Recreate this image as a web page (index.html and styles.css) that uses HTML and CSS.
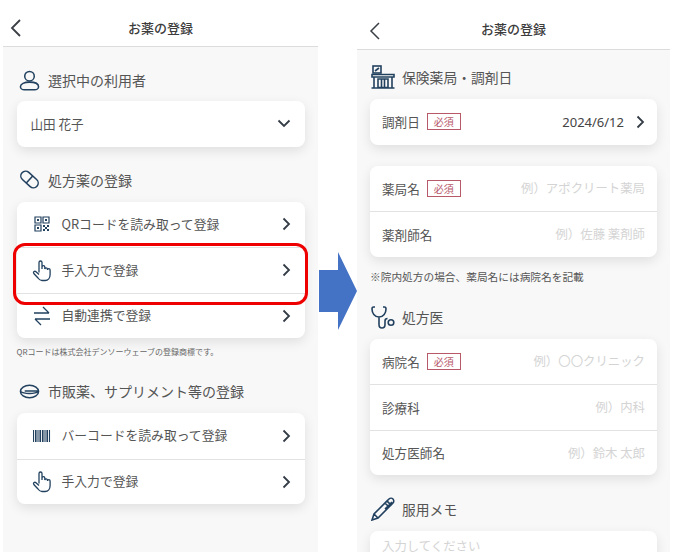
FILE: index.html
```html
<!DOCTYPE html>
<html lang="ja">
<head>
<meta charset="utf-8">
<title>お薬の登録</title>
<link rel="stylesheet" href="styles.css">
</head>
<body>
<main class="stage">
  <section class="screen screen-left">
    <header class="nav">
      <svg class="back" viewBox="0 0 12 20"><path d="M10 2 2 10l8 8"/></svg>
      <h1>お薬の登録</h1>
    </header>
    <div class="content">
      <h2 class="head h-user"><svg class="ico" viewBox="0 0 22 22"><circle cx="11" cy="6.500" r="5"/><path d="M1.500 17.500c0-3 4-4.800 9.500-4.800s9.500 1.800 9.500 4.800c0 2-2 3.300-4 3.300H5.500c-2 0-4-1.300-4-3.300z"/></svg>選択中の利用者</h2>
      <div class="card"><div class="row"><span class="label">山田 花子</span><svg class="chev-d" viewBox="0 0 14 9"><path d="M1.500 1.500 7 7l5.500-5.500"/></svg></div></div>
      <h2 class="head h-rx"><svg class="ico" viewBox="0 0 22 22"><g transform="rotate(42 11 11)"><rect x="0.500" y="6" width="21" height="10" rx="5"/><path d="M11 6v10"/></g></svg>処方薬の登録</h2>
      <div class="card">
        <div class="row"><span class="rico"><svg viewBox="0 0 16 16" class="qr"><path d="M1 1h6v6H1zM9 1h6v6H9zM1 9h6v6H1z"/><path class="fill" d="M3 3h2v2H3zM11 3h2v2h-2zM3 11h2v2H3zM9 9h2v2H9zM13 9h2v2h-2zM11 11h2v2h-2zM9 13h2v2H9zM13 13h2v2h-2z"/></svg></span><span class="label">QRコードを読み取って登録</span><svg class="chev" viewBox="0 0 9 14"><path d="M1.500 1.500 7 7l-5.500 5.500"/></svg></div>
        <div class="row"><span class="rico"><svg viewBox="0 0 20 22" class="hand"><path d="M7 13V3a1.500 1.500 0 0 1 3 0v6.500V7.500a1.400 1.400 0 0 1 2.800 0v2a1.400 1.400 0 0 1 2.700 0v1a1.300 1.300 0 0 1 2.600 0v4.500c0 3.500-2 6-5 6H10c-2 0-3-1-4-2.500L1.800 14c-1-1.500.8-3 2.200-1.800L7 15"/></svg></span><span class="label">手入力で登録</span><svg class="chev" viewBox="0 0 9 14"><path d="M1.500 1.500 7 7l-5.500 5.500"/></svg></div>
        <div class="row"><span class="rico"><svg viewBox="0 0 18 20" class="sw"><path d="M1 7h15M10 1l6 6M17 13H2M8 19l-6-6"/></svg></span><span class="label">自動連携で登録</span><svg class="chev" viewBox="0 0 9 14"><path d="M1.500 1.500 7 7l-5.500 5.500"/></svg></div>
      </div>
      <p class="fine">QRコードは株式会社デンソーウェーブの登録商標です。</p>
      <h2 class="head h-otc"><svg class="ico" viewBox="0 0 22 22"><ellipse cx="11" cy="11" rx="9.500" ry="6.500"/><path d="M1.500 11c2 1.500 5 2 9.500 2s7.500-.5 9.500-2M6 10.500h14"/></svg>市販薬、サプリメント等の登録</h2>
      <div class="card">
        <div class="row"><span class="rico"><svg viewBox="0 0 18 12" class="bar"><path d="M.5 0v12M2.500 0v12M4 0v12M6 0v12M7.500 0v12M9.500 0v12M11 0v12M13 0v12M14.500 0v12M16.500 0v12"/></svg></span><span class="label">バーコードを読み取って登録</span><svg class="chev" viewBox="0 0 9 14"><path d="M1.500 1.500 7 7l-5.500 5.500"/></svg></div>
        <div class="row"><span class="rico"><svg viewBox="0 0 20 22" class="hand"><path d="M7 13V3a1.500 1.500 0 0 1 3 0v6.500V7.500a1.400 1.400 0 0 1 2.800 0v2a1.400 1.400 0 0 1 2.700 0v1a1.300 1.300 0 0 1 2.600 0v4.500c0 3.500-2 6-5 6H10c-2 0-3-1-4-2.500L1.800 14c-1-1.500.8-3 2.200-1.800L7 15"/></svg></span><span class="label">手入力で登録</span><svg class="chev" viewBox="0 0 9 14"><path d="M1.500 1.500 7 7l-5.500 5.500"/></svg></div>
      </div>
    </div>
  </section>

  <section class="screen screen-right">
    <header class="nav">
      <svg class="back" viewBox="0 0 12 20"><path d="M10 2 2 10l8 8"/></svg>
      <h1>お薬の登録</h1>
    </header>
    <div class="content">
      <h2 class="head h-ph"><svg class="ico-ph" viewBox="0 0 24 24"><path d="M1 9.500h22v2.500H1zM3 12v10.500M21 12v10.500M.5 23h23M7 14v8.500h10V14zM10.500 14v8.500M13.500 14v8.500"/><rect x="2" y="1" width="8" height="7"/><path d="M4 6 8 3"/></svg>保険薬局・調剤日</h2>
      <div class="card"><div class="row"><span class="label">調剤日</span><span class="req">必須</span><span class="value">2024/6/12</span><svg class="chev" viewBox="0 0 9 14"><path d="M1.500 1.500 7 7l-5.500 5.500"/></svg></div></div>
      <div class="card card-pharm">
        <div class="row"><span class="label">薬局名</span><span class="req">必須</span><span class="ph">例）アポクリート薬局</span></div>
        <div class="row"><span class="label">薬剤師名</span><span class="ph">例）佐藤 薬剤師</span></div>
      </div>
      <p class="note">※院内処方の場合、薬局名には病院名を記載</p>
      <h2 class="head h-doc"><svg class="ico-ph" viewBox="0 0 24 24"><path d="M4 2H2.500C1.500 2 1 3 1 4c0 4 2.500 8 7 8s7-4 7-8c0-1-.5-2-1.500-2H12M8 12v7.500c0 2 1.300 3.500 3 3.500s3-1.500 3-3.500V16c0-1.500 1-2.500 2.500-2.500"/><circle cx="20" cy="17.500" r="2.800"/></svg>処方医</h2>
      <div class="card">
        <div class="row"><span class="label">病院名</span><span class="req">必須</span><span class="ph">例）〇〇クリニック</span></div>
        <div class="row"><span class="label">診療科</span><span class="ph">例）内科</span></div>
        <div class="row"><span class="label">処方医師名</span><span class="ph">例）鈴木 太郎</span></div>
      </div>
      <h2 class="head h-memo"><svg class="ico-ph" viewBox="0 0 24 24"><path d="M1 23l2-6L16 4l4 4L7 21zM3 17l4 4M14 6l4 4M18 2c1-1 3-1 4 0s1 3 0 4l-2 2-4-4zM21 5l-7 7"/></svg>服用メモ</h2>
      <div class="card card-memo"><div class="row row-memo"><span class="ph-memo">入力してください</span></div></div>
    </div>
  </section>

  <div class="highlight"></div>
  <svg class="arrow" viewBox="0 0 38 78"><path d="M0 18h19V0l19 39-19 39V60H0z"/></svg>
</main>
</body>
</html>
```
FILE: styles.css
```css
* { box-sizing: border-box; }
html, body { margin: 0; padding: 0; background: #fff; }
body {
  width: 673px;
  height: 556px;
  overflow: hidden;
  font-family: "Noto Sans CJK JP", "Noto Sans", sans-serif;
  color: #4a4a4a;
}
.stage { position: relative; width: 673px; height: 556px; display: flex; gap: 39px; padding-left: 3px; padding-top: 12px; }
.screen { height: 540px; background: #f8f8f8; overflow: hidden; flex: none; }
.screen-left { width: 315px; }
.screen-right { width: 313px; }
.nav {
  display: flex;
  align-items: center;
  justify-content: center;
  position: relative;
  background: #fff;
  border-bottom: 1px solid #dcdcdc;
}
.screen-left .nav { height: 35px; }
.screen-right .nav { height: 38px; }
.nav h1 { margin: 0; font-size: 13px; font-weight: 500; color: #3c3c3c; line-height: 1; position: relative; top: -2px; }
.back { position: absolute; left: 7px; top: 6px; width: 12px; height: 20px; fill: none; stroke: #3a3f45; stroke-width: 1.800; }
.screen-right .back { left: 12px; top: 9px; stroke-width: 1.500; }
.content { display: flex; flex-direction: column; padding: 0 13.500px; }
.screen-right .content { padding: 0 13px; }
.head {
  display: flex;
  align-items: center;
  gap: 8.500px;
  margin: 0;
  height: 22px;
  padding-left: 2px;
  font-size: 14px;
  font-weight: 400;
  color: #555;
  white-space: nowrap;
}
.screen-right .head { padding-left: 1px; gap: 7px; font-size: 13.800px; }
.h-user { margin-top: 22px; margin-bottom: 10px; }
.h-rx { margin-top: 22px; margin-bottom: 11px; }
.h-otc { margin-top: 22px; margin-bottom: 11px; }
.h-ph { margin-top: 16px; margin-bottom: 11px; }
.h-doc { margin-top: 22px; margin-bottom: 11px; }
.h-memo { margin-top: 23px; margin-bottom: 11px; }
.ico { width: 21px; height: 21px; fill: none; stroke: #22415f; stroke-width: 1.600; flex: none; }
.ico-ph { width: 24px; height: 24px; fill: none; stroke: #22415f; stroke-width: 1.600; flex: none; }
.card { background: #fff; border-radius: 8px; box-shadow: 0 4px 12px rgba(0,0,0,.10); }
.card-pharm { margin-top: 21px; }
.row {
  display: flex;
  align-items: center;
  height: 45.500px;
  padding: 0 12px;
  border-top: 1px solid #e2e2e2;
  font-size: 12.600px;
  color: #555;
}
.row:first-child { border-top: 0; }
.screen-left .row { padding: 0 14px 0 14px; }
.label { white-space: nowrap; }
.rico { width: 20px; display: flex; justify-content: center; margin-right: 10px; margin-left: 1px; flex: none; }
.rico + .label { font-size: 12.800px; margin-bottom: 2px; }
.chev, .chev-d { margin-left: auto; fill: none; stroke: #343c45; stroke-width: 1.800; flex: none; }
.chev { width: 9px; height: 14px; }
.chev-d { width: 14px; height: 9px; }
.req {
  margin-left: 7px;
  width: 34px;
  height: 17px;
  border: 1px solid #b8596a;
  color: #b8596a;
  font-size: 10px;
  display: flex;
  align-items: center;
  justify-content: center;
}
.value { margin-left: auto; font-family: "Noto Sans", sans-serif; font-size: 13px; color: #444; }
.value + .chev { margin-left: 12px; }
.ph { margin-left: auto; color: #d4d4d4; font-size: 12.400px; white-space: nowrap; }
.qr { width: 16px; height: 16px; fill: none; stroke: #22415f; stroke-width: 1.200; }
.qr .fill { fill: #22415f; stroke: none; }
.hand { width: 21px; height: 23px; fill: #fff; stroke: #22415f; stroke-width: 1.300; }
.sw { width: 18px; height: 20px; fill: none; stroke: #22415f; stroke-width: 1.300; }
.bar { width: 18px; height: 12px; fill: none; stroke: #22415f; stroke-width: 1.100; }
.fine { margin: 8px 0 0; font-size: 8px; line-height: 12px; color: #666; white-space: nowrap; }
.note { margin: 13px 0 0; font-size: 10.700px; line-height: 14px; color: #555; white-space: nowrap; }
.card-memo { min-height: 60px; }
.row-memo { align-items: flex-start; padding-top: 6px; }
.ph-memo { color: #d4d4d4; font-size: 12.400px; }
.highlight { position: absolute; left: 13px; top: 243px; width: 295px; height: 62px; border: 3px solid #ee0000; border-radius: 12px; }
.arrow { position: absolute; left: 319px; top: 252px; width: 38px; height: 78px; fill: #4472c4; }
```
